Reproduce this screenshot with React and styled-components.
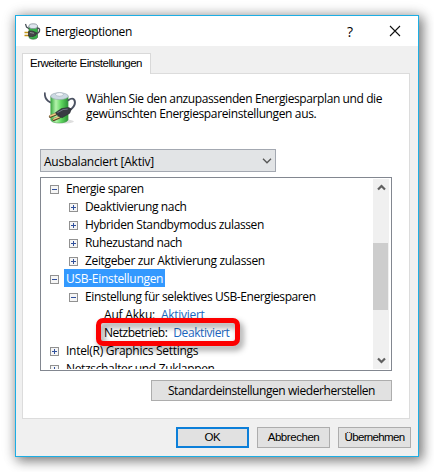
import React from 'react';
import styled, { createGlobalStyle } from 'styled-components';

const Global = createGlobalStyle`
  *, *::before, *::after { box-sizing: border-box; }
  body { margin: 0; background: #fff; color: #000; overflow: hidden;
    font: 12px/15px "Open Sans", "Noto Sans", sans-serif; }
`;

const Desktop = styled.div`
  width: 434px;
  height: 472px;
  padding: 15px;
`;

const Dialog = styled.main`
  display: flex;
  flex-direction: column;
  width: 404px;
  height: 442px;
  border: 1px solid #1caee4;
  background: #f0f0f0;
  box-shadow: 3px 3px 11px 1px rgba(0, 0, 0, 0.46), 0 0 14px rgba(0, 0, 0, 0.15);
`;

const TitleBar = styled.header`
  display: flex;
  align-items: center;
  height: 30px;
  flex: none;
  padding: 0 17px 0 8px;
  background: #fff;
`;

const Label = styled.span`
  white-space: pre;
  letter-spacing: ${(p) => p.$track || -0.36}px;
`;

const Title = styled(Label).attrs({ as: 'h1' })`
  flex: 1;
  margin: 0 0 0 4px;
  font-size: 12px;
  font-weight: 400;
`;

const CaptionButton = styled.button`
  display: flex;
  justify-content: center;
  align-items: center;
  width: 12px;
  height: 20px;
  margin-left: ${(p) => p.$gap || 0}px;
  padding: 0;
  border: 0;
  background: none;
  font: 14px/15px "Open Sans", sans-serif;
`;

const SmallIcon = styled.svg`
  flex: none;
`;

const Content = styled.div`
  display: flex;
  flex-direction: column;
  padding: 7px 8px 0 6px;
`;

const Tab = styled.div`
  z-index: 1;
  width: 129px;
  height: 21px;
  margin-bottom: -1px;
  padding: 2px 0 0 7px;
  border: 1px solid #d9d9d9;
  border-bottom: 0;
  background: #fff;
  font: 11.5px/15px "Liberation Sans", Arial, sans-serif;
`;

const Page = styled.section`
  display: flex;
  flex-direction: column;
  width: 388px;
  height: 346px;
  padding: 17px 17px 0;
  border: 1px solid #dcdcdc;
  background: #fff;
`;

const Intro = styled.div`
  display: flex;
  height: 58px;
  padding-left: 4px;
`;

const IntroText = styled.p`
  display: flex;
  flex-direction: column;
  margin: 0 0 0 9px;
`;

const Select = styled.div`
  display: flex;
  justify-content: space-between;
  align-items: center;
  width: 236px;
  height: 23px;
  margin-bottom: 5px;
  padding: 1px 3px 0 3px;
  border: 1px solid #a3a8b1;
  background: #e2e4e6;
`;

const ListBox = styled.div`
  display: flex;
  width: 352px;
  height: 194px;
  padding: 1px;
  border: 1px solid #828790;
  background: #fff;
`;

const Tree = styled.div`
  flex: 1;
  height: 190px;
  overflow: hidden;
`;

const Row = styled.div`
  display: flex;
  align-items: center;
  height: 18px;
  padding-left: ${(p) => 8 + p.$level * 19}px;
  line-height: 18px;
`;

const RowLabel = styled(Label)`
  height: 18px;
  margin-left: 5px;
  padding: 1px 2px 0;
  color: ${(p) => (p.$selected ? '#fff' : '#000')};
  background: ${(p) => (p.$selected ? '#3399ff' : 'transparent')};
`;

const Setting = styled.div`
  display: flex;
  gap: 6px;
  margin-left: 16px;
  padding-top: 1px;
`;

const Value = styled(Label)`
  color: #1a66c0;
`;

const Highlighted = styled.div`
  position: relative;
`;

const Marker = styled.div`
  position: absolute;
  left: 54px;
  top: -5px;
  width: 144px;
  height: 28px;
  border: 5px solid #fc0000;
  border-radius: 7px;
  filter: drop-shadow(3px 4px 3px rgba(0, 0, 0, 0.42));
`;

const ScrollBar = styled.div`
  display: flex;
  flex-direction: column;
  width: 16px;
  height: 190px;
  margin-right: 1px;
  background: #f0f0f0;
`;

const ScrollArrow = styled.div`
  display: flex;
  justify-content: center;
  align-items: center;
  height: 17px;
`;

const Track = styled.div`
  flex: 1;
  padding-top: 47px;
`;

const Thumb = styled.div`
  width: 15px;
  height: 67px;
  background: #cdcdcd;
`;

const Button = styled.button`
  display: flex;
  justify-content: center;
  align-items: center;
  width: ${(p) => p.$width || 73}px;
  height: 21px;
  padding: 0;
  border: ${(p) => (p.$primary ? '2px solid #0c7fd9' : '1px solid #adadad')};
  background: #e1e1e1;
  color: #000;
  font: ${(p) => (p.$plain ? '11.5px/15px "Liberation Sans", Arial' : '12px/15px "Open Sans"')}, sans-serif;
`;

const ResetButton = styled(Button)`
  align-self: flex-end;
  margin-top: 9px;
`;

const Actions = styled.footer`
  display: flex;
  justify-content: flex-end;
  gap: 8px;
  padding-top: 8px;
  margin-right: -1px;
`;

const LargeIcon = styled.svg`
  flex: none;
`;

const ToggleBox = styled.svg`
  flex: none;
  margin-top: 2px;
`;

const BatteryIcon = () => (
  <LargeIcon width="33" height="33" viewBox="0 0 32 32">
    <defs>
      <linearGradient id="cell">
        <stop offset="0" stopColor="#38ab40" />
        <stop offset="0.3" stopColor="#b4f3ac" />
        <stop offset="0.6" stopColor="#5fd75f" />
        <stop offset="1" stopColor="#2b9236" />
      </linearGradient>
    </defs>
    <ellipse cx="18" cy="29.5" rx="11" ry="2" fill="#000" opacity="0.13" />
    <path d="M.8 2c-.2 4 1.300 7.200 5.400 9" fill="none" stroke="#4d5364" strokeWidth="1.700" strokeLinecap="round" />
    <path d="M6.500 5v23c1 4 15.500 4 16.900 0V5z" fill="url(#cell)" stroke="#56a55c" strokeWidth=".5" />
    <ellipse cx="15" cy="5" rx="8.500" ry="3.300" fill="#cbd8e2" stroke="#9ba7b1" strokeWidth=".6" />
    <ellipse cx="15" cy="3.300" rx="3.800" ry="1.800" fill="#f4f7fa" stroke="#9ba9b6" strokeWidth=".6" />
    <path d="M23.500 9c4-3 6.500-1.500 6.500 2.300 0 3-2 5-5 7.200" fill="none" stroke="#4b5262" strokeWidth="1.900" strokeLinecap="round" />
    <path d="M11.500 22.500l-5.500 2.300M15 25.500l-5.500 2.300" stroke="#5a4423" strokeWidth="2.600" strokeLinecap="round" />
    <path d="M11.500 22l-5.500 2.300M15 25l-5.500 2.300" stroke="#edc784" strokeWidth="1.500" strokeLinecap="round" />
    <path d="M11 21l6-4 7-1 2.500 1.500-1.500 4-7.500 4.500-3.500-1.500z" fill="#383b43" stroke="#202229" strokeWidth=".5" />
    <path d="M13 21l5.500-3 4.500-.5" fill="none" stroke="#777d8b" strokeWidth=".9" />
  </LargeIcon>
);

const SmallBatteryIcon = () => (
  <SmallIcon width="17" height="17" viewBox="0 0 17 17">
    <path d="M1.500 1l1 3 3 2" fill="none" stroke="#454c55" strokeWidth="1.200" />
    <path d="M5 3v11.500c1.500 2.200 7 2.200 8.500 0V3z" fill="#38b24a" stroke="#35683c" strokeWidth=".7" />
    <path d="M7.500 7.500v7" stroke="#95e89b" strokeWidth="1.500" />
    <ellipse cx="9.200" cy="3.200" rx="4.300" ry="2.400" fill="#dfe5ee" stroke="#87929c" strokeWidth=".8" />
    <path d="M13 5.500c3-1.500 3.500 3 1 4.500l-2 1" fill="none" stroke="#4a5058" strokeWidth="1.400" />
    <path d="M.5 9.500h5M.5 12.500h5" stroke="#c09418" strokeWidth="1.300" />
    <path d="M4.500 8.500l3-.8 5 2-1 2.800-4 1.500-3-1z" fill="#45474b" stroke="#25272a" strokeWidth=".6" />
    <path d="M6 9.500l4 .8" stroke="#8f9396" />
  </SmallIcon>
);

const Toggle = ({ open }) => (
  <ToggleBox width="9" height="9" viewBox="0 0 9 9" shapeRendering="crispEdges">
    <rect x=".5" y=".5" width="8" height="8" fill="#f5f5f5" stroke="#919191" />
    <path d={open ? 'M2 4.500h5' : 'M2 4.500h5M4.500 2v5'} stroke="#30509c" />
  </ToggleBox>
);

const Chevron = ({ up, bold }) => (
  <svg width={bold ? 9 : 10} height={bold ? 7 : 6} viewBox={bold ? '0 0 9 7' : '0 0 10 6'}>
    {bold ? (
      <path d={up ? 'M1 5.500l3.500-3.500 3.500 3.500' : 'M1 1.500l3.500 3.500 3.500-3.500'} fill="none" stroke="#606060" strokeWidth="2.200" />
    ) : (
      <path d="M1 .8l4 4 4-4" fill="none" stroke="#555" strokeWidth="1.300" />
    )}
  </svg>
);

const Node = ({ level = 0, open, selected, track, children }) => (
  <Row $level={level}>
    <Toggle open={open} />
    <RowLabel $selected={selected} $track={track}>{children}</RowLabel>
  </Row>
);

const Option = ({ name, value, nameTrack, valueTrack }) => (
  <Row $level={2}>
    <Setting>
      <Label $track={nameTrack}>{name}</Label>
      <Value $track={valueTrack}>{value}</Value>
    </Setting>
  </Row>
);

export default function App() {
  return (
    <Desktop>
      <Global />
      <Dialog>
        <TitleBar>
          <SmallBatteryIcon />
          <Title $track={-0.37}>Energieoptionen</Title>
          <CaptionButton aria-label="Hilfe">?</CaptionButton>
          <CaptionButton aria-label="Schließen" $gap={33}>
            <svg width="12" height="12" viewBox="0 0 12 12">
              <path d="M1 1l10 10M11 1L1 11" stroke="#111" strokeWidth="1.100" />
            </svg>
          </CaptionButton>
        </TitleBar>
        <Content>
          <Tab><Label $track={-0.5}>Erweiterte Einstellungen</Label></Tab>
          <Page>
            <Intro>
              <BatteryIcon />
              <IntroText>
                <Label $track={-0.4}>Wählen Sie den anzupassenden Energiesparplan und die</Label>
                <Label $track={-0.37}>gewünschten Energiespareinstellungen aus.</Label>
              </IntroText>
            </Intro>
            <Select>
              <Label $track={-0.22}>Ausbalanciert [Aktiv]</Label>
              <Chevron />
            </Select>
            <ListBox>
              <Tree>
                <Node open track={-0.43}>Energie sparen</Node>
                <Node level={1} track={-0.35}>Deaktivierung nach</Node>
                <Node level={1} track={-0.38}>Hybriden Standbymodus zulassen</Node>
                <Node level={1} track={-0.4}>Ruhezustand nach</Node>
                <Node level={1} track={-0.35}>Zeitgeber zur Aktivierung zulassen</Node>
                <Node open selected track={-0.29}>USB-Einstellungen</Node>
                <Node level={1} open track={-0.41}>Einstellung für selektives USB-Energiesparen</Node>
                <Option name="Auf Akku:" value="Aktiviert" nameTrack={-0.2} valueTrack={-0.29} />
                <Highlighted>
                  <Option name="Netzbetrieb:" value="Deaktiviert" nameTrack={-0.49} valueTrack={-0.42} />
                  <Marker />
                </Highlighted>
                <Node track={-0.28}>Intel(R) Graphics Settings</Node>
                <Node track={-0.34}>Netzschalter und Zuklappen</Node>
              </Tree>
              <ScrollBar>
                <ScrollArrow><Chevron up bold /></ScrollArrow>
                <Track><Thumb /></Track>
                <ScrollArrow><Chevron bold /></ScrollArrow>
              </ScrollBar>
            </ListBox>
            <ResetButton $width={241}>
              <Label $track={-0.43}>Standardeinstellungen wiederherstellen</Label>
            </ResetButton>
          </Page>
          <Actions>
            <Button $plain $primary><Label $track={-0.4}>OK</Label></Button>
            <Button $plain><Label $track={-0.45}>Abbrechen</Label></Button>
            <Button $plain><Label $track={-0.65}>Übernehmen</Label></Button>
          </Actions>
        </Content>
      </Dialog>
    </Desktop>
  );
}
